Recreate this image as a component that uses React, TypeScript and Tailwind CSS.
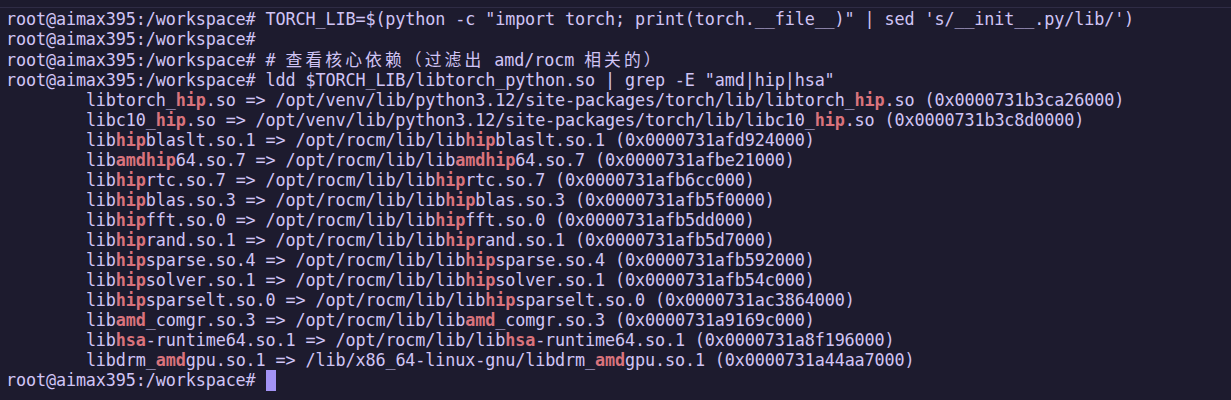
const prompt = "root@aimax395:/workspace# ";

// each entry: [before, highlighted, after, path before, highlighted, after, address]
const libs: string[][] = [
  ["libtorch_", "hip", ".so", "/opt/venv/lib/python3.12/site-packages/torch/lib/libtorch_", "hip", ".so", "0x0000731b3ca26000"],
  ["libc10_", "hip", ".so", "/opt/venv/lib/python3.12/site-packages/torch/lib/libc10_", "hip", ".so", "0x0000731b3c8d0000"],
  ["lib", "hip", "blaslt.so.1", "/opt/rocm/lib/lib", "hip", "blaslt.so.1", "0x0000731afd924000"],
  ["lib", "amdhip", "64.so.7", "/opt/rocm/lib/lib", "amdhip", "64.so.7", "0x0000731afbe21000"],
  ["lib", "hip", "rtc.so.7", "/opt/rocm/lib/lib", "hip", "rtc.so.7", "0x0000731afb6cc000"],
  ["lib", "hip", "blas.so.3", "/opt/rocm/lib/lib", "hip", "blas.so.3", "0x0000731afb5f0000"],
  ["lib", "hip", "fft.so.0", "/opt/rocm/lib/lib", "hip", "fft.so.0", "0x0000731afb5dd000"],
  ["lib", "hip", "rand.so.1", "/opt/rocm/lib/lib", "hip", "rand.so.1", "0x0000731afb5d7000"],
  ["lib", "hip", "sparse.so.4", "/opt/rocm/lib/lib", "hip", "sparse.so.4", "0x0000731afb592000"],
  ["lib", "hip", "solver.so.1", "/opt/rocm/lib/lib", "hip", "solver.so.1", "0x0000731afb54c000"],
  ["lib", "hip", "sparselt.so.0", "/opt/rocm/lib/lib", "hip", "sparselt.so.0", "0x0000731ac3864000"],
  ["lib", "amd", "_comgr.so.3", "/opt/rocm/lib/lib", "amd", "_comgr.so.3", "0x0000731a9169c000"],
  ["lib", "hsa", "-runtime64.so.1", "/opt/rocm/lib/lib", "hsa", "-runtime64.so.1", "0x0000731a8f196000"],
  ["libdrm_", "amd", "gpu.so.1", "/lib/x86_64-linux-gnu/libdrm_", "amd", "gpu.so.1", "0x0000731a44aa7000"],
];

function Hl({ children }: { children: string }) {
  return <span className="font-bold text-[#d9737c]">{children}</span>;
}

function Cjk({ children }: { children: string }) {
  return (
    <span className="tracking-[3.1px]" style={{ fontFamily: '"Noto Sans CJK SC", sans-serif' }}>
      {children}
    </span>
  );
}

export default function App() {
  return (
    <div className="w-[1231px] h-[400px] bg-[#1d1b2e] overflow-hidden pt-[7px]">
      <div className="h-px bg-[#2f2c45]" />
      <pre
        className="pl-[6px] pt-px text-[16.8px] tracking-[-0.12px] leading-[20px] text-[#d0c4f5] whitespace-pre"
        style={{ fontFamily: '"DejaVu Sans Mono", "Noto Sans CJK SC", monospace' }}
      >
        <div>{prompt}TORCH_LIB=$(python -c "import torch; print(torch.__file__)" | sed 's/__init__.py/lib/')</div>
        <div>{prompt.trimEnd()}</div>
        <div>
          {prompt}# <Cjk>查看核心依赖（过滤出</Cjk> amd/rocm <Cjk>相关的）</Cjk>
        </div>
        <div>{prompt}ldd $TORCH_LIB/libtorch_python.so | grep -E "amd|hip|hsa"</div>
        {libs.map((l) => (
          <div key={l[6]}>
            {"        "}
            {l[0]}
            <Hl>{l[1]}</Hl>
            {l[2]} =&gt; {l[3]}
            <Hl>{l[4]}</Hl>
            {l[5]} ({l[6]})
          </div>
        ))}
        <div className="flex items-center h-[20px]">
          <span>{prompt}</span>
          <span className="inline-block w-[10px] h-[21px] bg-[#a393f5]" />
        </div>
      </pre>
    </div>
  );
}
